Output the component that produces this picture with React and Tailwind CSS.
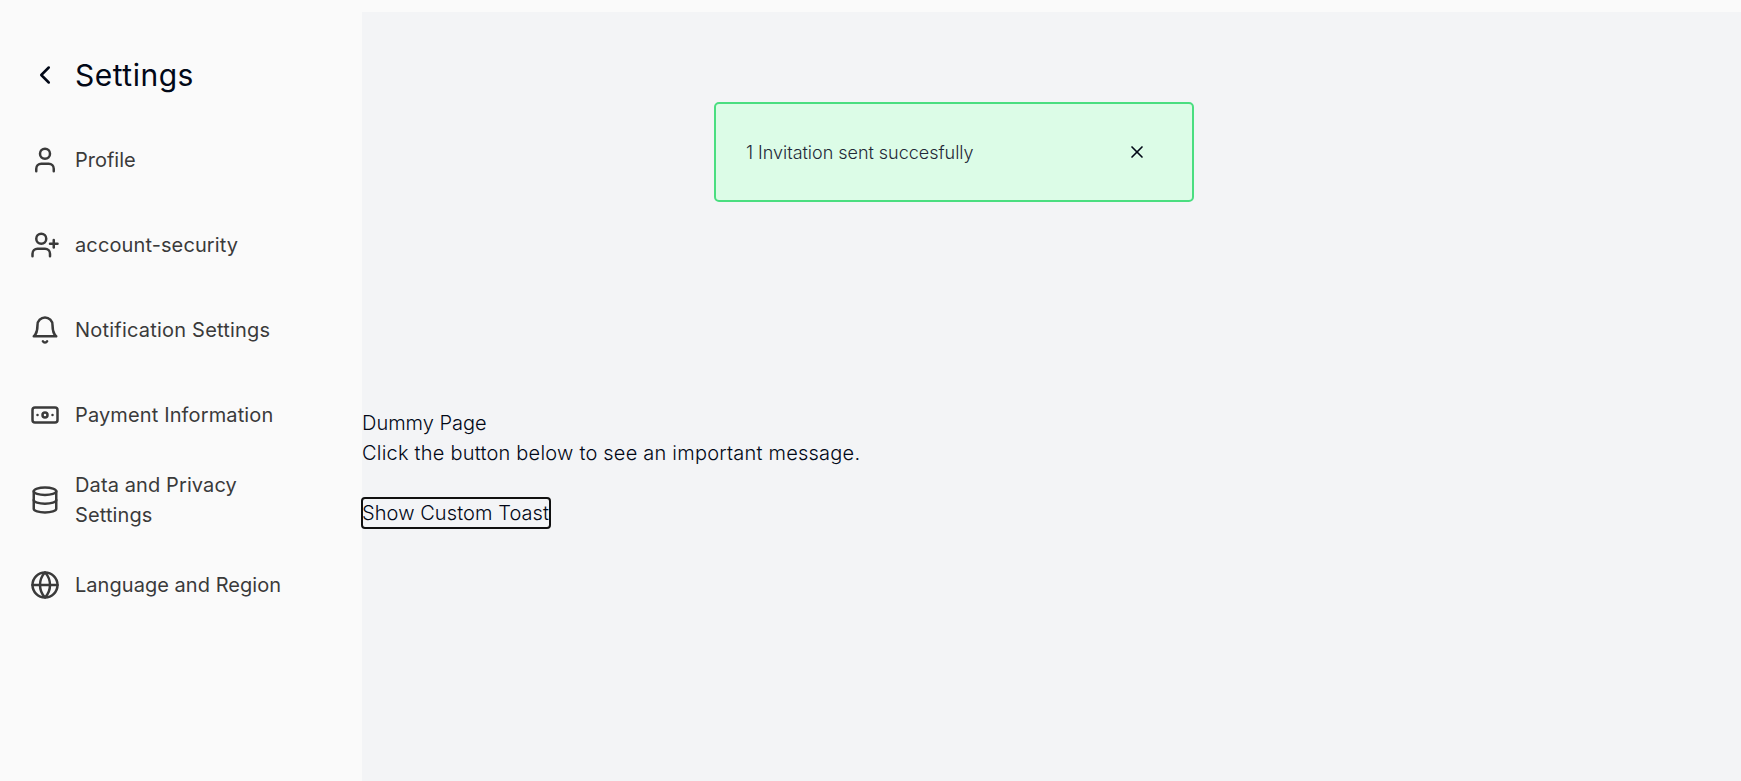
import React from "react";
import { ChevronLeft, User, UserPlus, Banknote, Database, Globe, X } from "lucide-react";

function Bell({ size, strokeWidth, className }) {
  return (
    <svg width={size} height={size} viewBox="0 0 24 24" fill="none" stroke="currentColor" strokeWidth={strokeWidth} strokeLinecap="round" strokeLinejoin="round" className={className}>
      <path d="M6 8a6 6 0 0 1 12 0c0 7 3 9 3 9H3s3-2 3-9" />
      <path d="M10.3 21a1.94 1.94 0 0 0 3.4 0" />
    </svg>
  );
}

const items = [
  { Icon: User, label: "Profile", tracking: "tracking-normal" },
  { Icon: UserPlus, label: "account-security", tracking: "tracking-[0.11px]" },
  { Icon: Bell, label: "Notification Settings", tracking: "tracking-[0.21px]" },
  { Icon: Banknote, label: "Payment Information", tracking: "tracking-[0.13px]" },
  { Icon: Database, label: "Data and Privacy Settings", tracking: "tracking-[0.11px]" },
  { Icon: Globe, label: "Language and Region", tracking: "tracking-[0.04px]" },
];

export default function App() {
  return (
    <div className="flex h-[781px] overflow-hidden bg-[#fafafa] pt-3 font-['Inter',sans-serif] text-xl leading-[30px] text-[#020817]">
      <aside className="flex w-[362px] shrink-0 flex-col px-[30px] pt-10">
        <header className="flex h-[46px] items-center gap-[15px]">
          <ChevronLeft size={30} strokeWidth={2} />
          <h1 className="text-3xl tracking-[0.5px]">Settings</h1>
        </header>
        <nav className="mt-[19.5px] flex flex-col text-[#3a3a3a]">
          {items.map(({ Icon, label, tracking }) => (
            <a key={label} className="flex h-[85px] items-center gap-[15px]">
              <Icon size={30} strokeWidth={2} className="shrink-0" />
              <span className={"w-[225px] " + tracking}>{label}</span>
            </a>
          ))}
        </nav>
      </aside>
      <main className="flex flex-1 flex-col bg-[#f3f4f6] font-light">
        <div className="ml-[352px] mt-[90px] flex h-[100px] w-[480px] items-center justify-between rounded-[5px] border-2 border-[#4ade80] bg-[#dcfce7] pl-[30px] pr-[45px] text-lg text-[#1f2937]">
          <p className="pt-0.5 tracking-[-0.03px]">1 Invitation sent succesfully</p>
          <X size={20} className="text-[#020817]" />
        </div>
        <div className="mt-[206px] flex flex-col items-start">
          <p>Dummy Page</p>
          <p className="tracking-[0.22px]">Click the button below to see an important message.</p>
          <button className="mt-[30px] h-[30px] w-[188px] whitespace-nowrap rounded-[3px] text-left tracking-[0.08px] outline-2 -outline-offset-1 outline-[#101010]">Show Custom Toast</button>
        </div>
      </main>
    </div>
  );
}
